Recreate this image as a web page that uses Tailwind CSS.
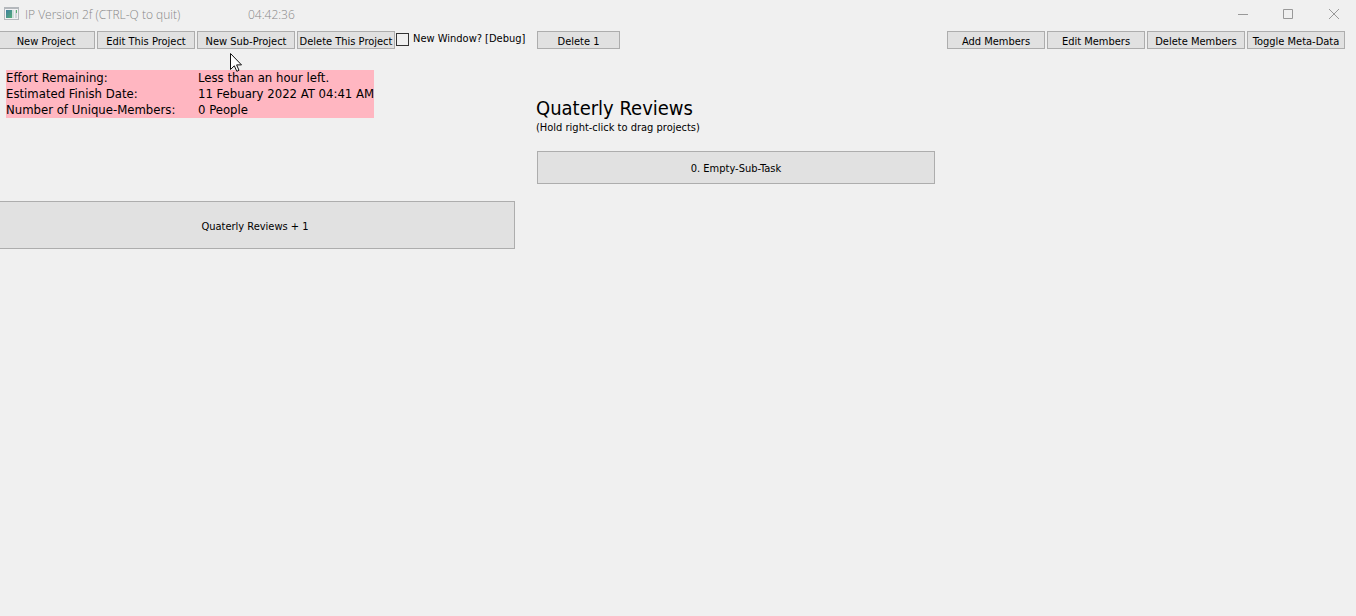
<!DOCTYPE html>
<html lang="en">
<head>
<meta charset="utf-8">
<title>IP Version 2f (CTRL-Q to quit)</title>
<script src="https://cdn.jsdelivr.net/npm/@tailwindcss/browser@4"></script>
</head>
<body class="relative min-h-screen bg-[#f0f0f0] font-['DejaVu_Sans_Condensed','DejaVu_Sans',sans-serif] text-[11px] text-black">
<header class="flex h-[31px] items-start font-['Open_Sans',sans-serif] text-[12px] leading-[29px] font-light text-[#888]">
  <svg class="mt-[7px] ml-1 h-[13px] w-[15px]" viewBox="0 0 15 13" aria-hidden="true" shape-rendering="crispEdges">
    <defs><linearGradient id="g" x1="0" y1="0" x2="1" y2="1"><stop offset="0" stop-color="#3f7fa0"/><stop offset="1" stop-color="#54ac78"/></linearGradient></defs>
    <rect width="15" height="13" fill="#b4b8bc"/>
    <rect x="1" y="2" width="13" height="10" fill="#f2f2f4"/>
    <rect x="2" y="3" width="6" height="8" fill="url(#g)"/>
    <rect x="8" y="3" width="2" height="8" fill="#cfe0dc"/>
    <rect x="11" y="3" width="2" height="8" fill="#d2d6da"/>
    <rect x="12" y="3" width="1" height="3" fill="#58b070"/>
  </svg>
  <h1 class="ml-[6px] w-[223px] whitespace-nowrap">IP Version 2f (CTRL-Q to quit)</h1>
  <time>04:42:36</time>
  <div class="ml-auto flex">
    <button aria-label="Minimize" class="flex h-7 w-[46px] items-center justify-center"><svg width="10" height="10" viewBox="0 0 10 10"><path d="M0 5.500H10" stroke="#999" shape-rendering="crispEdges"/></svg></button>
    <button aria-label="Maximize" class="flex h-7 w-11 items-center justify-center"><svg width="10" height="10" viewBox="0 0 10 10"><path d="M.5.500H9.500V9.500H.5Z" fill="none" stroke="#999"/></svg></button>
    <button aria-label="Close" class="flex h-7 w-[46px] items-center justify-center pl-px"><svg width="10" height="10" viewBox="0 0 10 10"><path d="M0 0L10 10M10 0L0 10" stroke="#999"/></svg></button>
  </div>
</header>
<main class="grid grid-cols-[525fr_398fr_398fr] gap-x-3 pr-[11px]">
  <section class="min-w-0">
    <div class="-ml-[3px] flex h-[18px] gap-[2px] whitespace-nowrap">
      <button class="h-[18px] w-[98px] shrink-0 border border-[#adadad] bg-[#e1e1e1]"><span class="flex h-[14px] justify-center overflow-hidden leading-[18px]">New Project</span></button>
      <button class="h-[18px] w-[98px] shrink-0 border border-[#adadad] bg-[#e1e1e1]"><span class="flex h-[14px] justify-center overflow-hidden leading-[18px]">Edit This Project</span></button>
      <button class="h-[18px] w-[98px] shrink-0 border border-[#adadad] bg-[#e1e1e1]"><span class="flex h-[14px] justify-center overflow-hidden leading-[18px]">New Sub-Project</span></button>
      <button class="h-[18px] w-[98px] shrink-0 border border-[#adadad] bg-[#e1e1e1]"><span class="flex h-[14px] justify-center overflow-hidden leading-[18px]">Delete This Project</span></button>
      <label class="-ml-px flex h-4 items-center gap-1"><input type="checkbox" class="size-[13px] appearance-none border border-[#333] bg-transparent checked:bg-[#333]">New Window? [Debug]</label>
    </div>
    <table class="mt-[21px] ml-[6px] bg-[#ffb6c1] text-left text-[13px] leading-4 whitespace-nowrap">
      <tbody>
      <tr><th scope="row" class="w-48 p-0 font-normal">Effort Remaining:</th><td class="w-[175px] p-0">Less than an hour left.</td></tr>
      <tr><th scope="row" class="p-0 font-normal">Estimated Finish Date:</th><td class="p-0">11 Febuary 2022 AT 04:41 AM</td></tr>
      <tr><th scope="row" class="p-0 font-normal">Number of Unique-Members:</th><td class="p-0">0 People</td></tr>
      </tbody>
    </table>
    <div class="mt-[83px] -ml-[5px] pr-[10px]">
      <button class="h-12 w-full border border-[#adadad] bg-[#e1e1e1] pt-1">Quaterly Reviews + 1</button>
    </div>
  </section>
  <section class="min-w-0">
    <button class="block h-[18px] w-[83px] border border-[#adadad] bg-[#e1e1e1]"><span class="flex h-[14px] justify-center overflow-hidden leading-[18px]">Delete 1</span></button>
    <h2 class="mt-[47px] -ml-px text-[20px] leading-6 whitespace-nowrap">Quaterly Reviews</h2>
    <p class="-ml-px leading-4 whitespace-nowrap">(Hold right-click to drag projects)</p>
    <button class="mt-[15px] block h-[33px] w-full border border-[#adadad] bg-[#e1e1e1] pt-[3px]">0. Empty-Sub-Task</button>
  </section>
  <section class="grid h-[18px] grid-cols-4 gap-[2px] whitespace-nowrap">
    <button class="h-[18px] border border-[#adadad] bg-[#e1e1e1]"><span class="flex h-[14px] justify-center overflow-hidden leading-[18px]">Add Members</span></button>
    <button class="h-[18px] border border-[#adadad] bg-[#e1e1e1]"><span class="flex h-[14px] justify-center overflow-hidden leading-[18px]">Edit Members</span></button>
    <button class="h-[18px] border border-[#adadad] bg-[#e1e1e1]"><span class="flex h-[14px] justify-center overflow-hidden leading-[18px]">Delete Members</span></button>
    <button class="h-[18px] border border-[#adadad] bg-[#e1e1e1]"><span class="flex h-[14px] justify-center overflow-hidden leading-[18px]">Toggle Meta-Data</span></button>
  </section>
</main>
<svg class="pointer-events-none absolute top-[53px] left-[230px]" width="12" height="19" viewBox="0 0 12 19" aria-hidden="true"><path d="M.5.500V16.500L4.300 12.800L6.800 18.300L9 17.300L6.600 11.900H11.500Z" fill="#fff" stroke="#111"/></svg>
</body>
</html>
